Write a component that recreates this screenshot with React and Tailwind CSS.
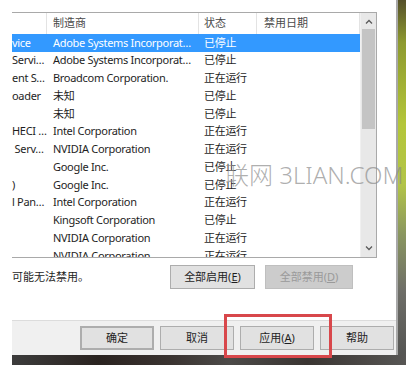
import React from 'react';

const rows = [
  { a: 'vice', m: 'Adobe Systems Incorporat…', s: '已停止', sel: true },
  { a: 'Servi…', m: 'Adobe Systems Incorporat…', s: '已停止' },
  { a: 'ent S…', m: 'Broadcom Corporation.', s: '正在运行' },
  { a: 'oader', m: '未知', s: '已停止' },
  { a: '', m: '未知', s: '已停止' },
  { a: 'HECI …', m: 'Intel Corporation', s: '正在运行' },
  { a: ' Serv…', m: 'NVIDIA Corporation', s: '正在运行' },
  { a: '', m: 'Google Inc.', s: '已停止' },
  { a: ')', m: 'Google Inc.', s: '已停止' },
  { a: 'l Pan…', m: 'Intel Corporation', s: '正在运行' },
  { a: '', m: 'Kingsoft Corporation', s: '已停止' },
  { a: '', m: 'NVIDIA Corporation', s: '正在运行' },
  { a: '', m: 'NVIDIA Corporation', s: '正在运行' },
];

const Chevron = ({ up }) => (
  <svg width="8" height="5" viewBox="0 0 8 5">
    <polyline
      points={up ? '1,4.5 4,1.5 7,4.5' : '1,0.5 4,3.5 7,0.5'}
      fill="none"
      stroke="#5a5a5a"
      strokeWidth="1.3"
    />
  </svg>
);

const Btn = ({ children, className = '' }) => (
  <div
    className={`flex items-center justify-center h-[24px] bg-[#e1e1e1] border border-[#adadad] text-[11px] text-[#1e1e1e] ${className}`}
  >
    {children}
  </div>
);

export default function App() {
  return (
    <div className="relative flex w-[406px] h-[365px] bg-white overflow-hidden font-['Noto_Sans','Noto_Sans_CJK_SC',sans-serif]">
      <div className="w-[12px] shrink-0 bg-white" />
      <div className="flex flex-col flex-1">
        <div className="flex flex-1">
          {/* dialog */}
          <div className="flex flex-col w-[384px] shrink-0">
            <div className="flex flex-col flex-1 bg-white border-b border-[#dcdcdc] pt-[12px]">
              {/* list */}
              <div className="flex w-[365px] h-[246px] border-t border-r border-b border-[#a9a9a9] overflow-hidden">
                <div className="flex flex-col w-[348px] overflow-hidden">
                  <div className="flex h-[21px] shrink-0 text-[11px] text-[#4a4a4a]">
                    <div className="w-[35px] border-r border-[#e3e3e3]" />
                    <div className="w-[152px] flex items-center pl-[6px] border-r border-[#e3e3e3]">制造商</div>
                    <div className="w-[58px] flex items-center pl-[5px] border-r border-[#e3e3e3]">状态</div>
                    <div className="w-[103px] flex items-center pl-[7px] border-r border-[#e3e3e3]">禁用日期</div>
                  </div>
                  {rows.map((r, i) => (
                    <div
                      key={i}
                      className={`flex h-[17.75px] shrink-0 items-center text-[11px] tracking-[-0.3px] whitespace-nowrap ${
                        r.sel ? 'bg-[#3399ff] text-white' : 'text-[#1e1e1e]'
                      }`}
                    >
                      <div className="w-[35px] overflow-hidden whitespace-pre">{r.a}</div>
                      <div className="w-[152px] pl-[6px] overflow-hidden">{r.m}</div>
                      <div className="w-[58px] pl-[5px] overflow-hidden">{r.s}</div>
                      <div className="w-[103px]" />
                    </div>
                  ))}
                </div>
                {/* scrollbar */}
                <div className="flex flex-col w-[16px] bg-[#e8e8e8] border-l border-[#f0f0f0]">
                  <div className="h-[16px] flex items-center justify-center">
                    <Chevron up />
                  </div>
                  <div className="h-[100px] mx-[1px] bg-[#c4c4c4]" />
                  <div className="flex-1" />
                  <div className="h-[17px] flex items-center justify-center">
                    <Chevron />
                  </div>
                </div>
              </div>
              {/* note + buttons */}
              <div className="flex items-center mt-[7px] h-[24px]">
                <div className="w-[158px] text-[11px] text-[#1e1e1e]">可能无法禁用。</div>
                <Btn className="w-[85px]">
                  全部启用(<span className="underline">E</span>)
                </Btn>
                <div className="w-[10px]" />
                <div className="flex items-center justify-center w-[88px] h-[24px] bg-[#cccccc] border border-[#bfbfbf] text-[11px] text-[#9a9a9a]">
                  全部禁用(<span className="underline">D</span>)
                </div>
              </div>
            </div>
            <div className="flex items-center h-[34px] bg-[#f0f0f0] pl-[68px] gap-[6px]">
              <Btn className="w-[74px] border-2 border-[#3c7fb1]">确定</Btn>
              <Btn className="w-[74px]">取消</Btn>
              <Btn className="w-[74px]">
                应用(<span className="underline">A</span>)
              </Btn>
              <Btn className="w-[74px]">帮助</Btn>
            </div>
          </div>
          <div className="w-[2px] bg-[#a8a8a8]" />
          <div className="flex-1 bg-[linear-gradient(180deg,#55502a_0%,#8e9a30_12%,#b4c63a_35%,#b2c448_52%,#8a9660_66%,#6e6e68_82%,#555553_100%)]" />
        </div>
        <div className="h-[10px] bg-[linear-gradient(90deg,#3c3c3c_0%,#2a2320_22%,#3a3330_40%,#4c4a48_55%,#3a3532_75%,#575654_100%)]" />
      </div>

      {/* watermark */}
      <div className="absolute left-[225px] top-[163px] text-[24px] font-light leading-none text-[#8c8c8c]/70 whitespace-nowrap pointer-events-none">
        联网 3LIAN.COM
      </div>

      {/* red highlight */}
      <div className="absolute left-[224px] top-[314px] w-[108px] h-[44px] border-[3px] border-[#d8474b] pointer-events-none" />
    </div>
  );
}
